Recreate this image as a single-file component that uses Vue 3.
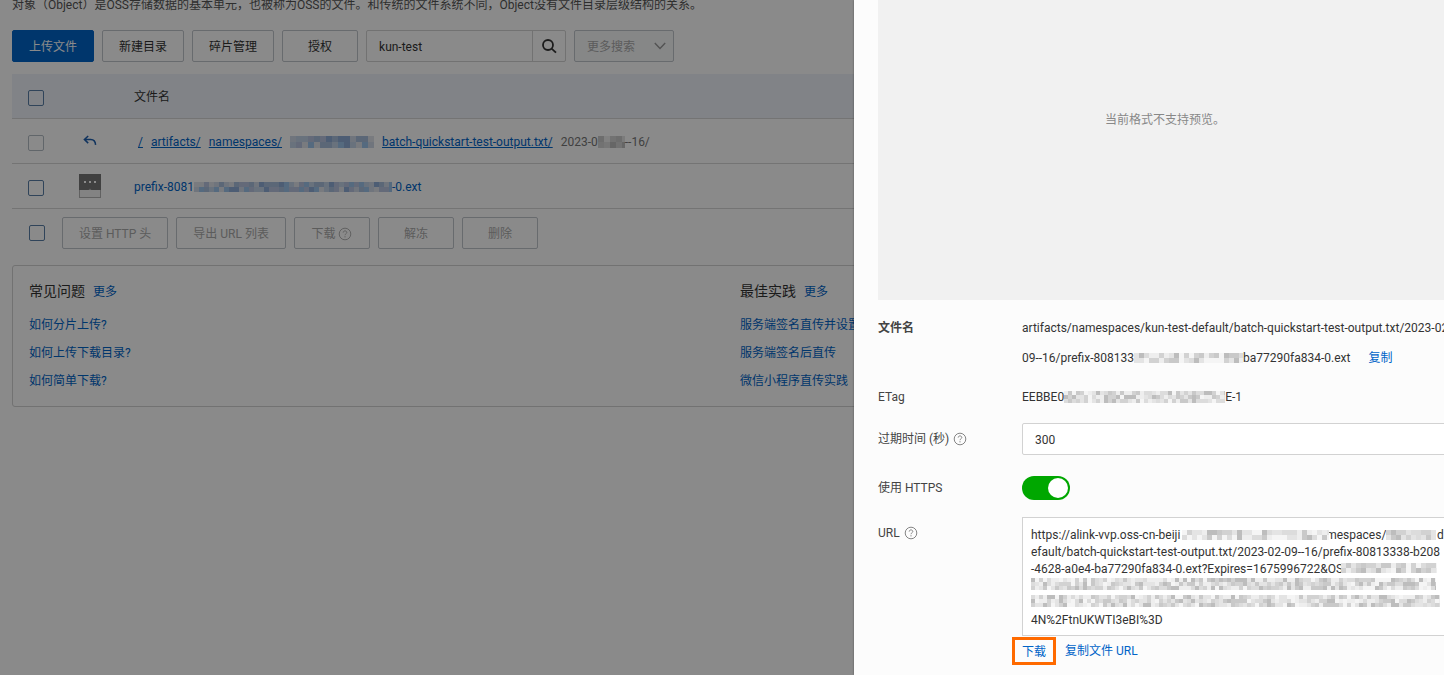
<script setup>
import { h, ref } from 'vue'

const keyword = ref('kun-test')
const expires = ref('300')
const https = ref(true)

const gap = (n) => '\u00a0'.repeat(n)
const url = ref(
  [
    'https://alink-vvp.oss-cn-beiji' + gap(49) + 'mespaces/' + gap(17) + 'd',
    'efault/batch-quickstart-test-output.txt/2023-02-09--16/prefix-80813338-b208',
    '-4628-a0e4-ba77290fa834-0.ext?Expires=1675996722&OS',
    '',
    '',
    '4N%2FtnUKWTI3eBI%3D',
  ].join('\n'),
)

const faq = ['如何分片上传?', '如何上传下载目录?', '如何简单下载?']
const practices = ['服务端签名直传并设置', '服务端签名后直传', '微信小程序直传实践']
const batch = ['解冻', '删除']

const palettes = {
  blue: ['#a9bfdd', '#c3d2e8', '#8fadd6', '#d0d8e8', '#b9c4e0', '#9ec4ea', '#dfe3ea'],
  grey: ['#d2d2d2', '#e4e4e4', '#bdbdbd', '#eeeeee', '#c9c9c9', '#dcdcdc', '#f5f5f5'],
}

// Pixelated cover for masked parts of a value.
const Mosaic = ({ w, rows = 2, tone = 'grey', seed = 1, cell = 5 }) => {
  const cols = Math.ceil(w / cell)
  const colors = palettes[tone]
  let s = seed * 7919
  const rects = []
  for (let r = 0; r < rows; r++) {
    for (let c = 0; c < cols; c++) {
      s = (s * 1103515245 + 12345) % 2147483648
      rects.push(
        h('rect', {
          x: c * cell, y: r * cell, width: cell, height: cell,
          fill: colors[Math.floor(s / 65536) % colors.length],
        }),
      )
    }
  }
  return h('svg', { width: w, height: rows * cell, 'aria-hidden': 'true', 'shape-rendering': 'crispEdges' }, rects)
}
Mosaic.props = ['w', 'rows', 'tone', 'seed', 'cell']

const Help = () =>
  h('svg', { width: 14, height: 14, viewBox: '0 0 14 14', fill: 'none', stroke: 'currentColor', 'stroke-width': 0.9, 'aria-hidden': 'true' }, [
    h('circle', { cx: 7, cy: 7, r: 5.8 }),
    h('path', { d: 'M5.2 5.6c0-1 .8-1.7 1.8-1.7s1.8.7 1.8 1.6c0 1.2-1.8 1.4-1.8 2.7' }),
    h('path', { d: 'M7 9.2v1.2' }),
  ])
</script>

<template>
  <div class="page">
    <main class="main">
      <p class="intro">对象（Object）是OSS存储数据的基本单元，也被称为OSS的文件。和传统的文件系统不同，Object没有文件目录层级结构的关系。</p>

      <div class="toolbar">
        <button class="btn primary">上传文件</button>
        <button class="btn">新建目录</button>
        <button class="btn">碎片管理</button>
        <button class="btn">授权</button>
        <div class="search">
          <input v-model="keyword" type="text" aria-label="搜索文件" />
          <button aria-label="搜索">
            <svg width="16" height="16" viewBox="0 0 16 16" fill="none" stroke="#333" stroke-width="1.8">
              <circle cx="7" cy="7" r="5" />
              <path d="M10.6 10.6 15 14.6" />
            </svg>
          </button>
        </div>
        <div class="more">
          <select disabled aria-label="更多搜索">
            <option>更多搜索</option>
          </select>
          <svg width="12" height="8" viewBox="0 0 12 8" fill="none" stroke="#999" stroke-width="1.4"><path d="M.8 1 6 6.4 11.2 1" /></svg>
        </div>
      </div>

      <table class="files">
        <thead>
          <tr>
            <th class="pick"><input type="checkbox" aria-label="全选" /></th>
            <th class="kind"></th>
            <th>文件名</th>
          </tr>
        </thead>
        <tbody>
          <tr>
            <td class="pick"><input type="checkbox" disabled aria-label="上级目录" /></td>
            <td class="kind">
              <a href="#" class="back" aria-label="返回上级">
                <svg width="14" height="12" viewBox="0 0 14 12" fill="none" stroke="#1e5fae" stroke-width="1.5"><path d="M5.2 1 1.4 4.5l3.8 3.6M1.6 4.5h6.2c3 0 4.6 1.8 4.8 5.4" /></svg>
              </a>
            </td>
            <td>
              <div class="crumbs">
                <a href="#">/</a>
                <a href="#">artifacts/</a>
                <a href="#">namespaces/</a>
                <Mosaic :w="84" :rows="2" :cell="6" tone="blue" :seed="3" />
                <a href="#">batch-quickstart-test-output.txt/</a>
                <span class="masked">2023-0<Mosaic :w="27" :rows="2" :cell="6" :seed="5" />--16/</span>
              </div>
            </td>
          </tr>
          <tr>
            <td class="pick"><input type="checkbox" aria-label="选择文件" /></td>
            <td class="kind">
              <svg class="doc" width="22" height="24" viewBox="0 0 22 24">
                <path d="M0 0h22v24H0z" fill="#b3b3b3" />
                <path d="M1 16h20v7H1z" fill="#f2f2f2" />
                <path d="M0 0h22v16H12.5L11 14.5 9.5 16H0z" fill="#777" />
                <path d="M5 7h2v2H5zM10 7h2v2h-2zM15 7h2v2h-2z" fill="#fff" />
              </svg>
            </td>
            <td><a href="#" class="masked">prefix-8081<Mosaic :w="198" tone="blue" :seed="8" />-0.ext</a></td>
          </tr>
        </tbody>
      </table>

      <div class="batch">
        <input type="checkbox" aria-label="选择全部" />
        <button class="btn" disabled>设置 HTTP 头</button>
        <button class="btn" disabled>导出 URL 列表</button>
        <button class="btn" disabled>下载 <Help /></button>
        <button v-for="b in batch" :key="b" class="btn" disabled>{{ b }}</button>
      </div>

      <div class="guides">
        <section>
          <h3>常见问题 <a href="#">更多</a></h3>
          <ul>
            <li v-for="t in faq" :key="t"><a href="#">{{ t }}</a></li>
          </ul>
        </section>
        <section>
          <h3>最佳实践 <a href="#">更多</a></h3>
          <ul>
            <li v-for="t in practices" :key="t"><a href="#">{{ t }}</a></li>
          </ul>
        </section>
      </div>
    </main>

    <div class="backdrop"></div>

    <aside class="drawer">
      <div class="preview">当前格式不支持预览。</div>
      <div class="form">
        <div class="row name">
          <span class="label strong">文件名</span>
          <div class="value path">
            <div>artifacts/namespaces/kun-test-default/batch-quickstart-test-output.txt/2023-02</div>
            <div class="masked">09--16/prefix-808133<Mosaic :w="109" :seed="11" />ba77290fa834-0.ext<a href="#" class="copy">复制</a></div>
          </div>
        </div>
        <div class="row etag">
          <span class="label">ETag</span>
          <div class="value masked">EEBBE0<Mosaic :w="161" :rows="3" :cell="4" :seed="14" />E-1</div>
        </div>
        <div class="row expire">
          <label class="label" for="expires">过期时间 (秒) <Help /></label>
          <input id="expires" v-model="expires" class="value text" type="text" />
        </div>
        <div class="row secure">
          <label class="label" for="https">使用 HTTPS</label>
          <input id="https" v-model="https" class="switch" type="checkbox" role="switch" />
        </div>
        <div class="row link">
          <label class="label" for="url">URL <Help /></label>
          <div class="value">
            <div class="urlbox">
              <textarea id="url" v-model="url" rows="6" readonly></textarea>
              <Mosaic class="m m1" :w="147" :seed="17" />
              <Mosaic class="m m2" :w="50" :seed="19" />
              <Mosaic class="m m3" :w="96" :seed="21" />
              <Mosaic class="m m4" :w="405" :rows="3" :cell="4" :seed="23" />
              <Mosaic class="m m5" :w="409" :rows="3" :cell="4" :seed="27" />
            </div>
            <div class="actions">
              <a href="#" class="marked">下载</a>
              <a href="#">复制文件 URL</a>
            </div>
          </div>
        </div>
      </div>
    </aside>
  </div>
</template>

<style>
body {
  margin: 0;
  background: #fff;
}
</style>

<style scoped>
.page {
  position: relative;
  min-height: 100vh;
  overflow: hidden;
  font-family: Roboto, "Noto Sans CJK SC", sans-serif;
  font-size: 12px;
  line-height: 18px;
  color: #333;
}
.page * {
  box-sizing: border-box;
}
button,
input,
select,
textarea {
  font: inherit;
  color: inherit;
  margin: 0;
}
a {
  color: #0064c8;
  text-decoration: none;
}
svg {
  flex: none;
}
.main {
  padding-left: 12px;
}
.intro {
  margin: 0;
  height: 30px;
  line-height: 10px;
  color: #555;
  white-space: nowrap;
}
.toolbar,
.batch {
  display: flex;
  align-items: center;
  gap: 8px;
}
.btn {
  display: inline-flex;
  align-items: center;
  justify-content: center;
  gap: 3px;
  height: 32px;
  min-width: 76px;
  padding: 2px 16px 0;
  border: 1px solid #c0c6cc;
  border-radius: 2px;
  background: transparent;
  white-space: nowrap;
}
.btn.primary {
  background: #0064c8;
  border-color: #0064c8;
  color: #fff;
}
.btn:disabled {
  color: #aaa;
}
.search {
  display: flex;
  width: 200px;
  height: 32px;
  border: 1px solid #d2d2d2;
  border-radius: 2px;
}
.search input {
  flex: 1;
  min-width: 0;
  padding: 2px 12px 0;
  border: 0;
  background: transparent;
}
.search button {
  display: grid;
  place-items: center;
  width: 33px;
  padding: 0;
  border: 0;
  border-left: 1px solid #d2d2d2;
  background: transparent;
}
.more {
  position: relative;
}
.more select {
  appearance: none;
  display: block;
  width: 100px;
  height: 32px;
  padding: 2px 12px 0;
  border: 1px solid #c0c6cc;
  border-radius: 2px;
  background: #f7f9fa;
  color: #aaa;
  opacity: 1;
}
.more svg {
  position: absolute;
  right: 8px;
  top: 12px;
}
input[type="checkbox"]:not(.switch) {
  appearance: none;
  display: block;
  flex: none;
  width: 16px;
  height: 16px;
  border: 1px solid #5a7fa6;
  border-radius: 2px;
  background: transparent;
}
input[type="checkbox"]:not(.switch):disabled {
  border-color: #b4bcc4;
}
.files {
  width: 100%;
  margin-top: 12px;
  border-collapse: collapse;
}
.files tr {
  height: 45px;
  border-bottom: 1px solid #d6d6d6;
}
.files thead tr {
  height: 44px;
}
.files th,
.files td {
  padding: 2px 8px 0;
  text-align: left;
  font-weight: 400;
}
.files thead {
  background: #eff3fa;
}
.files .pick {
  width: 50px;
  padding: 4px 0 0 16px;
}
.files .kind {
  width: 64px;
  padding: 0 0 0 17px;
}
.back {
  display: block;
  padding-left: 4px;
}
.back svg,
.doc {
  display: block;
}
.crumbs {
  display: flex;
  align-items: center;
  gap: 8px;
  padding-left: 4px;
}
.crumbs a {
  text-decoration: underline;
}
.crumbs .masked {
  color: #777;
}
.masked {
  display: flex;
  align-items: center;
  white-space: nowrap;
}
.batch {
  padding: 8px 0 0 17px;
}
.batch input {
  margin-right: 9px;
}
.guides {
  display: grid;
  grid-template-columns: 1fr 1fr;
  column-gap: 24px;
  margin-top: 16px;
  padding: 16px 16px 11px;
  border: 1px solid #d2d2d2;
  border-radius: 3px;
}
.guides h3 {
  display: flex;
  align-items: baseline;
  gap: 8px;
  margin: 0 0 10px;
  font-size: 14px;
  font-weight: 400;
  line-height: 18px;
}
.guides h3 a {
  font-size: 12px;
}
.guides ul {
  margin: 0;
  padding: 0;
  list-style: none;
}
.guides li {
  line-height: 28px;
  white-space: nowrap;
}
.backdrop {
  position: absolute;
  inset: 0;
  background: rgba(0, 0, 0, 0.46);
}
.drawer {
  position: absolute;
  top: 0;
  right: 0;
  bottom: 0;
  width: 590px;
  max-width: 100%;
  padding-left: 24px;
  overflow: hidden;
  background: #fcfcfc;
  box-shadow: 0 0 2px rgba(0, 0, 0, 0.4);
}
.preview {
  display: grid;
  place-items: center;
  height: 300px;
  padding: 0 0 60px 8px;
  background: #f1f1f1;
  color: #888;
}
.form {
  display: flex;
  flex-direction: column;
}
.row {
  display: flex;
  align-items: center;
}
.label {
  display: flex;
  align-items: center;
  gap: 4px;
  flex: none;
  width: 144px;
  color: #444;
}
.label svg {
  color: #777;
}
.label.strong {
  font-weight: 700;
}
.value {
  flex: 1;
  min-width: 0;
}
.row.name {
  align-items: flex-start;
  padding-top: 13px;
}
.name .label {
  line-height: 30px;
}
.path {
  line-height: 30px;
  white-space: nowrap;
}
.copy {
  margin-left: 18px;
}
.row.etag {
  padding-top: 15px;
}
.row.expire {
  padding-top: 17px;
}
.text {
  height: 32px;
  margin-right: -8px;
  padding: 2px 12px 0;
  border: 1px solid #d2d2d2;
  border-radius: 2px;
  background: #fff;
}
.row.secure {
  padding-top: 21px;
}
.switch {
  appearance: none;
  display: flex;
  align-items: center;
  justify-content: flex-end;
  width: 48px;
  height: 24px;
  padding: 2px;
  border-radius: 12px;
  background: #00a700;
}
.switch::before {
  content: "";
  width: 20px;
  height: 20px;
  border-radius: 50%;
  background: #fff;
}
.row.link {
  align-items: flex-start;
  padding-top: 17px;
}
.link .label {
  padding-top: 7px;
}
.urlbox {
  position: relative;
  margin-right: -8px;
}
.urlbox textarea {
  display: block;
  width: 100%;
  height: 119px;
  padding: 9px 8px 7px;
  border: 1px solid #d2d2d2;
  background: #fff;
  line-height: 17px;
  white-space: pre;
  overflow: hidden;
  resize: none;
}
.m {
  position: absolute;
}
.m1 {
  left: 160px;
  top: 13px;
}
.m2 {
  left: 364px;
  top: 13px;
}
.m3 {
  left: 319px;
  top: 46px;
}
.m4 {
  left: 9px;
  top: 61px;
}
.m5 {
  left: 9px;
  top: 78px;
}
.actions {
  display: flex;
  align-items: center;
  gap: 9px;
  margin: 1px 0 0 -10px;
}
.marked {
  padding: 3px 7px 1px;
  border: 3px solid #ff6a00;
}
</style>
